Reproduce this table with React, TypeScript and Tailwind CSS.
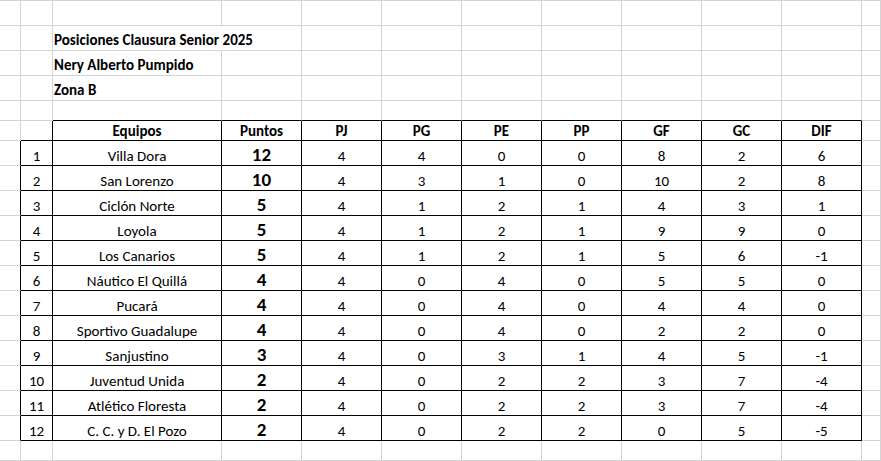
const teams: [string, number, number, number, number, number, number, number, number][] = [
  ['Villa Dora', 12, 4, 4, 0, 0, 8, 2, 6],
  ['San Lorenzo', 10, 4, 3, 1, 0, 10, 2, 8],
  ['Ciclón Norte', 5, 4, 1, 2, 1, 4, 3, 1],
  ['Loyola', 5, 4, 1, 2, 1, 9, 9, 0],
  ['Los Canarios', 5, 4, 1, 2, 1, 5, 6, -1],
  ['Náutico El Quillá', 4, 4, 0, 4, 0, 5, 5, 0],
  ['Pucará', 4, 4, 0, 4, 0, 4, 4, 0],
  ['Sportivo Guadalupe', 4, 4, 0, 4, 0, 2, 2, 0],
  ['Sanjustino', 3, 4, 0, 3, 1, 4, 5, -1],
  ['Juventud Unida', 2, 4, 0, 2, 2, 3, 7, -4],
  ['Atlético Floresta', 2, 4, 0, 2, 2, 3, 7, -4],
  ['C. C. y D. El Pozo', 2, 4, 0, 2, 2, 0, 5, -5],
];

const headers = ['Equipos', 'Puntos', 'PJ', 'PG', 'PE', 'PP', 'GF', 'GC', 'DIF'];

const RIGHT = { g: 'border-r-[#d4d4d4]', k: 'border-r-black', n: 'border-r-transparent' };
const BOTTOM = { g: 'border-b-[#d4d4d4]', k: 'border-b-black' };

const ROWS = 19;
const COLS = 12;

type Cell = { text?: string | number; kind?: 'title' | 'head' | 'pts' | 'data' };

function content(r: number, c: number): Cell {
  if (c === 2 && r === 1) return { text: 'Posiciones Clausura Senior 2025', kind: 'title' };
  if (c === 2 && r === 2) return { text: 'Nery Alberto Pumpido', kind: 'title' };
  if (c === 2 && r === 3) return { text: 'Zona B', kind: 'title' };
  if (r === 5 && c >= 2 && c <= 10) return { text: headers[c - 2], kind: 'head' };
  if (r >= 6 && r <= 17) {
    const t = teams[r - 6];
    if (c === 1) return { text: r - 5, kind: 'data' };
    if (c === 2) return { text: t[0], kind: 'data' };
    if (c === 3) return { text: t[1], kind: 'pts' };
    if (c >= 4 && c <= 10) return { text: t[c - 2], kind: 'data' };
  }
  return {};
}

function borders(r: number, c: number) {
  const inHead = r === 5 && c >= 2 && c <= 10;
  const inData = r >= 6 && r <= 17 && c >= 1 && c <= 10;
  let right: keyof typeof RIGHT = 'g';
  let bottom: keyof typeof BOTTOM = 'g';
  if (inHead || inData) {
    right = 'k';
    bottom = 'k';
  }
  if (r === 4 && c >= 2 && c <= 10) bottom = 'k';
  if (r === 5 && c === 1) {
    right = 'k';
    bottom = 'k';
  }
  if (r >= 6 && r <= 17 && c === 0) right = 'k';
  // title text overflows into the next cell, hiding the gridline
  if (r === 1 && c === 2) right = 'n';
  return `${RIGHT[right]} ${BOTTOM[bottom]}`;
}

export default function App() {
  const cells = [];
  for (let r = 0; r < ROWS; r++) {
    for (let c = 0; c < COLS; c++) {
      const { text, kind } = content(r, c);
      let inner = null;
      if (kind === 'title') {
        inner = <span className="whitespace-nowrap pl-[1px] pb-[2px] text-[15px] leading-[15px] font-bold">{text}</span>;
      } else if (kind === 'head') {
        inner = <span className="w-full text-center pb-[1px] text-[15px] leading-[15px] font-bold">{text}</span>;
      } else if (kind === 'pts') {
        inner = <span className="w-full text-center pb-[1px] text-[19px] leading-[19px] font-bold">{text}</span>;
      } else if (kind === 'data') {
        inner = <span className="w-full text-center pb-[1px] text-[15px] leading-[15px]">{text}</span>;
      }
      cells.push(
        <div key={`${r}-${c}`} className={`relative flex items-end overflow-visible border-r border-b ${borders(r, c)}`}>
          {inner}
        </div>
      );
    }
  }

  return (
    <div className="w-[881px] h-[461px] overflow-hidden bg-white text-black" style={{ fontFamily: 'Carlito, Calibri, Lato, "Liberation Sans", sans-serif' }}>
      <div className="grid grid-cols-[21px_32px_169px_repeat(8,80px)_19px] grid-rows-[25px_25px_25px_25px_20px_20px_repeat(12,25px)_20px] border-t border-t-[#d4d4d4]">
        {cells}
      </div>
    </div>
  );
}
